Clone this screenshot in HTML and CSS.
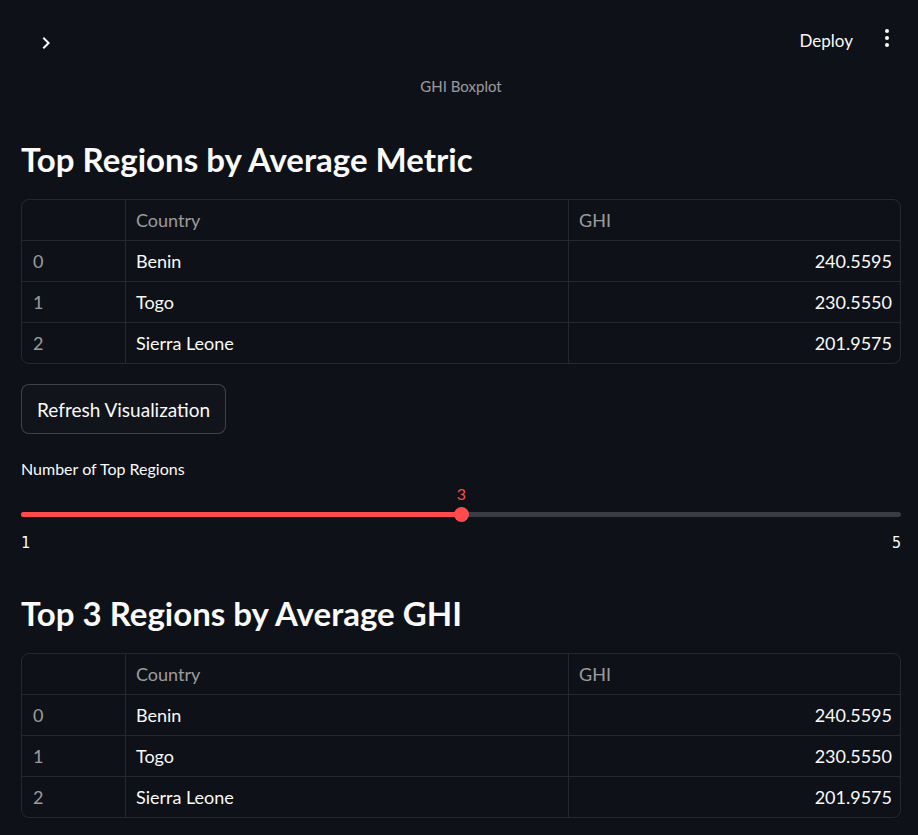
FILE: index.html
```html
<!DOCTYPE html>
<html lang="en">
<head>
<meta charset="utf-8">
<title>GHI Dashboard</title>
<link rel="stylesheet" href="styles.css">
</head>
<body>
<header class="topbar">
  <svg class="chevron" width="24" height="24" viewBox="0 0 24 24"><path d="M10 6L8.59 7.41 13.17 12l-4.58 4.59L10 18l6-6z" fill="#fafafa"/></svg>
  <div class="actions">
    <span class="deploy">Deploy</span>
    <svg class="kebab" width="24" height="24" viewBox="0 0 24 24"><circle cx="12" cy="5" r="2" fill="#fafafa"/><circle cx="12" cy="12" r="2" fill="#fafafa"/><circle cx="12" cy="19" r="2" fill="#fafafa"/></svg>
  </div>
</header>
<main class="main">
  <div class="caption">GHI Boxplot</div>
  <h2 class="heading">Top Regions by Average Metric</h2>
  <div class="grid">
    <div class="cell head"></div><div class="cell head">Country</div><div class="cell head">GHI</div>
    <div class="cell idx">0</div><div class="cell">Benin</div><div class="cell num">240.5595</div>
    <div class="cell idx">1</div><div class="cell">Togo</div><div class="cell num">230.5550</div>
    <div class="cell idx last">2</div><div class="cell last">Sierra Leone</div><div class="cell num last">201.9575</div>
  </div>
  <button class="btn">Refresh Visualization</button>
  <div class="label">Number of Top Regions</div>
  <div class="slider">
    <div class="track">
      <div class="fill" style="width: 50%"></div>
      <div class="thumb" style="left: 50%"><span class="thumb-value">3</span></div>
    </div>
    <div class="ticks"><span>1</span><span>5</span></div>
  </div>
  <h2 class="heading heading2">Top 3 Regions by Average GHI</h2>
  <div class="grid">
    <div class="cell head"></div><div class="cell head">Country</div><div class="cell head">GHI</div>
    <div class="cell idx">0</div><div class="cell">Benin</div><div class="cell num">240.5595</div>
    <div class="cell idx">1</div><div class="cell">Togo</div><div class="cell num">230.5550</div>
    <div class="cell idx last">2</div><div class="cell last">Sierra Leone</div><div class="cell num last">201.9575</div>
  </div>
</main>
</body>
</html>
```
FILE: styles.css
```css
* { box-sizing: border-box; }
html, body {
  margin: 0;
  background: #0e1117;
  color: #fafafa;
  font-family: "Lato", "Noto Sans", sans-serif;
}
.topbar {
  height: 76px;
  display: flex;
  align-items: center;
  justify-content: space-between;
  padding: 4px 19px 0 34px;
}
.chevron { margin-top: 6px; display: block; }
.actions { display: flex; align-items: center; gap: 22px; }
.deploy { font-size: 17px; font-weight: 400; margin-top: 0; }
.kebab { display: block; margin-top: -4px; }
.main { padding: 0 17px 0 21px; }
.caption {
  height: 20px;
  line-height: 20px;
  text-align: center;
  font-size: 15px;
  color: rgba(250, 250, 250, 0.6);
}
.heading {
  margin: 0;
  padding-top: 43px;
  height: 103px;
  line-height: 40px;
  font-size: 33px;
  font-weight: 700;
}
.heading2 { padding-top: 40px; height: 100px; }
.grid {
  display: grid;
  grid-template-columns: 104px 443px 1fr;
  border: 1px solid rgba(250, 250, 250, 0.1);
  border-radius: 8px;
  overflow: hidden;
}
.cell {
  height: 41px;
  border-bottom: 1px solid rgba(250, 250, 250, 0.1);
  border-right: 1px solid rgba(250, 250, 250, 0.1);
  padding: 0 8px 0 10px;
  line-height: 40px;
  font-size: 18px;
  white-space: nowrap;
}
.cell:nth-child(3n) { border-right: none; }
.cell.last { border-bottom: none; height: 40px; }
.head, .idx { color: rgba(250, 250, 250, 0.6); }
.idx { padding-left: 11px; }
.num { text-align: right; }
.btn {
  display: block;
  margin-top: 20px;
  height: 50px;
  padding: 0 15px;
  background: #11141b;
  border: 1px solid rgba(250, 250, 250, 0.2);
  border-radius: 8px;
  color: #fafafa;
  font-family: inherit;
  font-size: 19px;
}
.label {
  margin-top: 25px;
  height: 20px;
  line-height: 20px;
  font-size: 16px;
}
.slider { padding-top: 33px; }
.track {
  position: relative;
  height: 5px;
  border-radius: 3px;
  background: #3a3c44;
}
.fill {
  height: 5px;
  border-radius: 3px;
  background: #ff4b4b;
}
.thumb {
  position: absolute;
  top: -5px;
  width: 15px;
  height: 15px;
  margin-left: -7px;
  border-radius: 50%;
  background: #ff4b4b;
}
.thumb-value {
  position: absolute;
  left: 50%;
  bottom: 20px;
  transform: translateX(-50%);
  color: #ff4b4b;
  font-size: 16px;
  font-family: "Lato", sans-serif;
  line-height: 16px;
}
.ticks {
  display: flex;
  justify-content: space-between;
  margin-top: 16px;
  font-family: "DejaVu Sans Mono", monospace;
  font-size: 15px;
  line-height: 20px;
}
```
